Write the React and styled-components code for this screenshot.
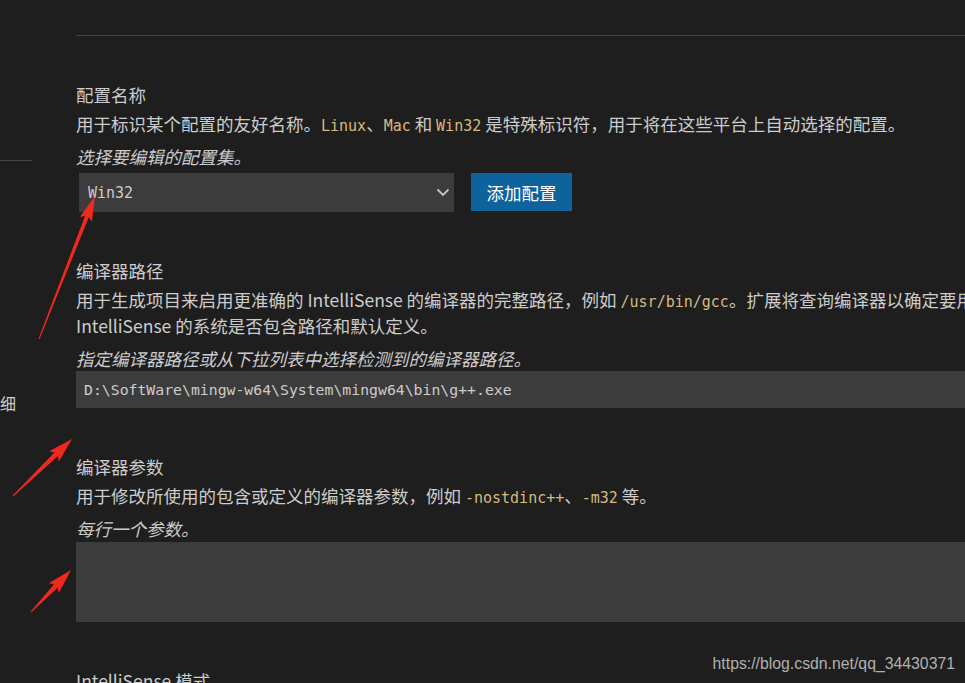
import React from 'react';
import styled, { createGlobalStyle } from 'styled-components';

const GlobalStyle = createGlobalStyle`
  html, body {
    margin: 0;
    padding: 0;
    background: #1e1e1e;
  }
  body {
    font-family: "Noto Sans CJK SC", "Noto Sans", sans-serif;
  }
`;

const Page = styled.div`
  position: relative;
  display: flex;
  width: 965px;
  height: 683px;
  overflow: hidden;
  background: #1e1e1e;
  color: #cccccc;
`;

const Sidebar = styled.div`
  flex: 0 0 32px;
  display: flex;
  flex-direction: column;
  padding-top: 160px;
`;

const SideRule = styled.div`
  height: 1px;
  background: #454545;
`;

const SideText = styled.div`
  margin-top: 232px;
  font-size: 16px;
  line-height: 20px;
  white-space: nowrap;
  overflow: hidden;
`;

const Main = styled.div`
  flex: 0 0 auto;
  width: 1100px;
  margin-left: 44px;
  padding-top: 35px;
`;

const TopRule = styled.div`
  height: 1px;
  background: #454545;
  margin-bottom: 46px;
`;

const Setting = styled.section`
  margin-bottom: 46px;
`;

const Title = styled.div`
  font-size: 17.5px;
  line-height: 26px;
  margin-bottom: 3px;
`;

const Desc = styled.div`
  font-size: 17.5px;
  line-height: 26px;
  height: 26px;
  white-space: nowrap;
`;

const Code = styled.span`
  font-family: "DejaVu Sans Mono", monospace;
  font-size: 15px;
  line-height: 1;
  color: #d7ba7d;
`;

const Hint = styled.div`
  font-size: 17.5px;
  line-height: 26px;
  font-style: italic;
  margin-top: 7px;
`;

const Row = styled.div`
  display: flex;
  align-items: stretch;
  gap: 17px;
  margin-top: ${p => p.$top}px;
  padding-left: ${p => p.$inset || 0}px;
`;

const Select = styled.div`
  width: 375px;
  height: 39px;
  box-sizing: border-box;
  display: flex;
  align-items: center;
  justify-content: space-between;
  padding: 0 4px 0 9px;
  background: #3c3c3c;
  font-family: "DejaVu Sans Mono", monospace;
  font-size: 15px;
  color: #cccccc;
`;

const Button = styled.div`
  width: 101px;
  height: 38px;
  display: flex;
  align-items: center;
  justify-content: center;
  background: #0e639c;
  color: #ffffff;
  font-size: 17.5px;
`;

const Input = styled.div`
  flex: 1;
  height: ${p => p.$h}px;
  box-sizing: border-box;
  display: flex;
  align-items: ${p => (p.$area ? 'flex-start' : 'center')};
  padding: 0 8px;
  background: #3c3c3c;
  font-family: "DejaVu Sans Mono", monospace;
  font-size: 14.8px;
  color: #cccccc;
  white-space: nowrap;
`;

const Watermark = styled.div`
  position: absolute;
  right: 10px;
  bottom: 10px;
  font-family: "Liberation Sans", Arial, sans-serif;
  font-size: 15.8px;
  color: #b0b0b0;
`;

const Annotations = styled.svg`
  position: absolute;
  inset: 0;
  pointer-events: none;
`;

const arrowPoints = (x1, y1, x2, y2, headLen, headW, shaftW) => {
  const dx = x2 - x1;
  const dy = y2 - y1;
  const len = Math.hypot(dx, dy);
  const ux = dx / len;
  const uy = dy / len;
  const nx = -uy;
  const ny = ux;
  const bx = x2 - ux * headLen;
  const by = y2 - uy * headLen;
  const pts = [
    [x1 + nx * 0.5, y1 + ny * 0.5],
    [bx + nx * shaftW / 2, by + ny * shaftW / 2],
    [bx - ux * 3 + nx * headW / 2, by - uy * 3 + ny * headW / 2],
    [x2, y2],
    [bx - ux * 3 - nx * headW / 2, by - uy * 3 - ny * headW / 2],
    [bx - nx * shaftW / 2, by - ny * shaftW / 2],
    [x1 - nx * 0.5, y1 - ny * 0.5],
  ];
  return pts.map(p => p.map(v => v.toFixed(1)).join(',')).join(' ');
};

const arrows = [
  [39, 339, 95, 196, 22, 13, 4],
  [13, 496, 72, 439, 22, 14, 5],
  [31, 612, 71, 570, 22, 14, 5],
];

function Chevron() {
  return (
    <svg width="14" height="9" viewBox="0 0 14 9">
      <path d="M1.5 1.5 L7 7 L12.5 1.5" fill="none" stroke="#c5c5c5" strokeWidth="1.8" />
    </svg>
  );
}

export default function App() {
  return (
    <>
      <GlobalStyle />
      <Page>
        <Sidebar>
          <SideRule />
          <SideText>细</SideText>
        </Sidebar>
        <Main>
          <TopRule />

          <Setting>
            <Title>配置名称</Title>
            <Desc>
              用于标识某个配置的友好名称。<Code>Linux</Code>、<Code>Mac</Code> 和 <Code>Win32</Code> 是特殊标识符，用于将在这些平台上自动选择的配置。
            </Desc>
            <Hint>选择要编辑的配置集。</Hint>
            <Row $top={3} $inset={3}>
              <Select>
                <span>Win32</span>
                <Chevron />
              </Select>
              <Button>添加配置</Button>
            </Row>
          </Setting>

          <Setting>
            <Title>编译器路径</Title>
            <Desc>
              用于生成项目来启用更准确的 IntelliSense 的编译器的完整路径，例如 <Code>/usr/bin/gcc</Code>。扩展将查询编译器以确定要用于
            </Desc>
            <Desc>IntelliSense 的系统是否包含路径和默认定义。</Desc>
            <Hint>指定编译器路径或从下拉列表中选择检测到的编译器路径。</Hint>
            <Row $top={-1}>
              <Input $h={37}>D:\SoftWare\mingw-w64\System\mingw64\bin\g++.exe</Input>
            </Row>
          </Setting>

          <Setting>
            <Title>编译器参数</Title>
            <Desc>
              用于修改所使用的包含或定义的编译器参数，例如 <Code>-nostdinc++</Code>、<Code>-m32</Code> 等。
            </Desc>
            <Hint>每行一个参数。</Hint>
            <Row $top={0}>
              <Input $h={80} $area />
            </Row>
          </Setting>

          <Setting>
            <Title>IntelliSense 模式</Title>
          </Setting>
        </Main>

        <Annotations width="965" height="683" viewBox="0 0 965 683">
          {arrows.map((a, i) => (
            <polygon key={i} points={arrowPoints(...a)} fill="#f2281c" />
          ))}
        </Annotations>
        <Watermark>https://blog.csdn.net/qq_34430371</Watermark>
      </Page>
    </>
  );
}
